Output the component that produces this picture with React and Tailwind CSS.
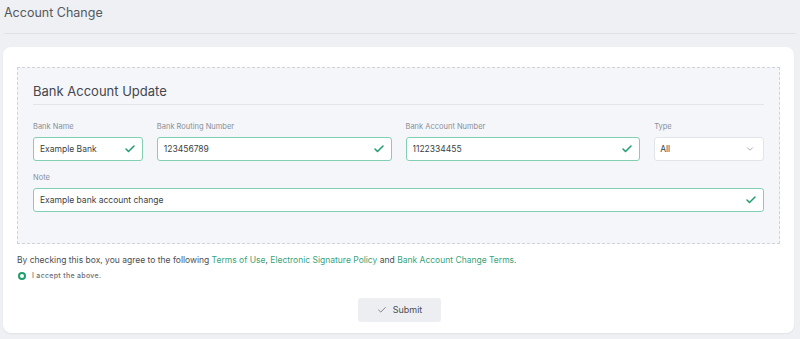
import React from 'react'
import { Check, ChevronDown } from 'lucide-react'

const font = { fontFamily: 'Inter, "Noto Sans", sans-serif' }

function Field({ label, value, className }) {
  return (
    <div className={className}>
      <div className="text-[7.5px] text-[#8a8f98] h-[12px] leading-[12px] mb-[4px]">{label}</div>
      <div className="h-[24px] rounded-[3px] border border-[#82cfb1] bg-white flex items-center pl-[6px] pr-[6px]">
        <span className="flex-1 text-[8.5px] text-[#3c3f44] truncate">{value}</span>
        <Check className="w-[12px] h-[12px] text-[#1f9d6c]" strokeWidth={3} />
      </div>
    </div>
  )
}

export default function App() {
  return (
    <div style={font} className="w-[800px] h-[339px] bg-[#eef0f4] overflow-hidden">
      <div className="px-[4px] pt-[4px]">
        <h1 className="text-[12.5px] text-[#55585e] leading-[18px]">Account Change</h1>
        <div className="mt-[11px] h-px bg-[#dfe2e7]" />
      </div>

      <div className="mx-[3px] mt-[13px] w-[791px] h-[286px] bg-white rounded-[8px] pt-[20px] px-[14px] shadow-[0_1px_2px_rgba(0,0,0,0.06)]">
        <div className="h-[177px] border border-dashed border-[#cfd3d9] bg-[#f5f6fa] px-[15px] pt-[14px]">
          <h2 className="text-[13px] text-[#44474c] leading-[18px]">Bank Account Update</h2>
          <div className="mt-[4px] h-px bg-[#e3e5ea]" />

          <div className="flex gap-[14px] mt-[16px]">
            <Field label="Bank Name" value="Example Bank" className="w-[110px]" />
            <Field label="Bank Routing Number" value="123456789" className="w-[235px]" />
            <Field label="Bank Account Number" value="1122334455" className="w-[235px]" />
            <div className="w-[110px]">
              <div className="text-[7.5px] text-[#8a8f98] h-[12px] leading-[12px] mb-[4px]">Type</div>
              <div className="h-[24px] rounded-[3px] border border-[#e1e4e8] bg-white flex items-center pl-[5px] pr-[8px]">
                <span className="flex-1 text-[8.5px] text-[#3c3f44]">All</span>
                <ChevronDown className="w-[10px] h-[10px] text-[#9aa0a8]" />
              </div>
            </div>
          </div>

          <Field label="Note" value="Example bank account change" className="mt-[11px]" />
        </div>

        <p className="mt-[10px] text-[8.5px] text-[#4b4e54] leading-[12px]">
          By checking this box, you agree to the following{' '}
          <span className="text-[#37a47c]">Terms of Use</span>,{' '}
          <span className="text-[#37a47c]">Electronic Signature Policy</span> and{' '}
          <span className="text-[#37a47c]">Bank Account Change Terms.</span>
        </p>
        <div className="flex items-center gap-[6px] mt-[5px] pl-[1px]">
          <span className="w-[8px] h-[8px] rounded-full border-[2.5px] border-[#1f9d6c] bg-white" />
          <span className="text-[7px] font-medium tracking-[0.3px] text-[#6b6f76]">I accept the above.</span>
        </div>

        <div className="flex justify-center mt-[16px]">
          <button className="w-[83px] h-[24px] rounded-[3px] bg-[#eceef1] flex items-center justify-center gap-[6px] text-[9px] text-[#4b4e54] ml-[2px]">
            <Check className="w-[10px] h-[10px] text-[#6b6f76]" strokeWidth={2} />
            Submit
          </button>
        </div>
      </div>
    </div>
  )
}
